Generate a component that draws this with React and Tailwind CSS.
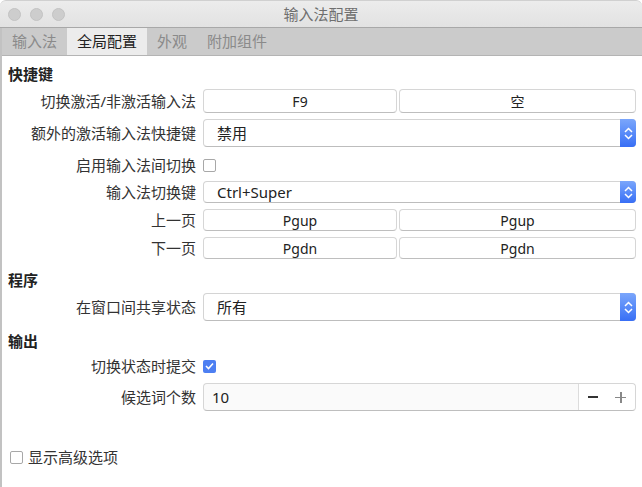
import React from 'react';

const font = { fontFamily: '"Noto Sans", "Noto Sans CJK SC", sans-serif' };

function Stepper() {
	return (
		<div className="w-[16px] self-stretch rounded-r-[4px] bg-gradient-to-b from-[#7ba6fb] to-[#386ef5] flex flex-col items-center justify-center gap-[1px] -my-px -mr-px">
			<svg width="9" height="6" viewBox="0 0 9 6">
				<path d="M1 5 L4.5 1.5 L8 5" stroke="white" strokeWidth="1.5" fill="none" />
			</svg>
			<svg width="9" height="6" viewBox="0 0 9 6">
				<path d="M1 1 L4.5 4.5 L8 1" stroke="white" strokeWidth="1.5" fill="none" />
			</svg>
		</div>
	);
}

function Select({ value }) {
	return (
		<div className="flex items-center h-full rounded-[4px] border border-[#d4d4d4] border-b-[#bdbdbd] bg-white">
			<span className="flex-1 pl-[13px] text-[15px] text-[#222]">{value}</span>
			<Stepper />
		</div>
	);
}

function KeyButton({ children, className = 'flex-1' }) {
	return (
		<div className={`h-full flex items-center justify-center rounded-[4px] border border-[#d6d6d6] border-b-[#bebebe] bg-white text-[14px] text-[#222] ${className}`}>
			{children}
		</div>
	);
}

function Checkbox({ checked }) {
	if (checked) {
		return (
			<div className="w-[13px] h-[13px] rounded-[2px] bg-[#4d7ff2] flex items-center justify-center">
				<svg width="9" height="8" viewBox="0 0 9 8">
					<path d="M1 4 L3.5 6.5 L8 1.5" stroke="white" strokeWidth="1.6" fill="none" />
				</svg>
			</div>
		);
	}
	return <div className="w-[13px] h-[13px] rounded-[2px] border border-[#a8a8a8] bg-white" />;
}

function Row({ label, className, children }) {
	return (
		<div className={`flex items-center pr-[6px] ${className}`}>
			<div className="w-[194px] shrink-0 text-right text-[15px] text-[#333] leading-none">{label}</div>
			<div className="ml-[7px] flex-1 h-full flex items-center">{children}</div>
		</div>
	);
}

function KeyPair({ a, b }) {
	return (
		<div className="flex-1 flex gap-[2px] h-full">
			<KeyButton className="w-[194px]">{a}</KeyButton>
			<KeyButton>{b}</KeyButton>
		</div>
	);
}

function Heading({ children, className }) {
	return <div className={`h-[24px] flex items-center pl-[6px] text-[15px] font-bold text-[#222] ${className}`}>{children}</div>;
}

export default function App() {
	const tabs = ['输入法', '全局配置', '外观', '附加组件'];

	return (
		<div className="w-[642px] h-[487px] bg-white overflow-hidden flex flex-col" style={font}>
			{/* Title bar */}
			<div className="h-[28px] relative flex items-center justify-center rounded-t-[6px] bg-gradient-to-b from-[#ececec] to-[#e2e2e2] border-t border-[#d0d0d0] border-b border-b-[#a8a8a8]">
				<div className="absolute left-[8px] top-[7px] flex gap-[9px]">
					<div className="w-[13px] h-[13px] rounded-full bg-[#cdcdcd] border border-[#c3c3c3]" />
					<div className="w-[13px] h-[13px] rounded-full bg-[#cdcdcd] border border-[#c3c3c3]" />
					<div className="w-[13px] h-[13px] rounded-full bg-[#cdcdcd] border border-[#c3c3c3]" />
				</div>
				<span className="text-[15px] text-[#6f6f6f]">输入法配置</span>
			</div>

			<div className="flex-1 flex flex-col border-l-2 border-[#c2c2c2]">
				{/* Tabs */}
				<div className="h-[28px] flex bg-[#cbcbcb] border-b border-[#b4b4b4]">
					{tabs.map((t, i) => (
						<div
							key={t}
							className={`flex items-center px-[10px] text-[15px] ${
								i === 1 ? 'bg-[#ececec] text-[#222]' : 'text-[#8a8a8a]'
							}`}
						>
							{t}
						</div>
					))}
				</div>

				{/* Content */}
				<div className="flex flex-col pt-[6px]">
					<Heading>快捷键</Heading>
					<Row label="切换激活/非激活输入法" className="mt-[3px] h-[24px]">
						<KeyPair a="F9" b="空" />
					</Row>
					<Row label="额外的激活输入法快捷键" className="mt-[6px] h-[28px]">
						<div className="flex-1 h-full">
							<Select value="禁用" />
						</div>
					</Row>
					<Row label="启用输入法间切换" className="mt-[6px] h-[24px]">
						<Checkbox />
					</Row>
					<Row label="输入法切换键" className="mt-[4px] h-[22px]">
						<div className="flex-1 h-full">
							<Select value="Ctrl+Super" />
						</div>
					</Row>
					<Row label="上一页" className="mt-[6px] h-[22px]">
						<KeyPair a="Pgup" b="Pgup" />
					</Row>
					<Row label="下一页" className="mt-[6px] h-[22px]">
						<KeyPair a="Pgdn" b="Pgdn" />
					</Row>

					<Heading className="mt-[9px]">程序</Heading>
					<Row label="在窗口间共享状态" className="mt-[1px] h-[28px]">
						<div className="flex-1 h-full">
							<Select value="所有" />
						</div>
					</Row>

					<Heading className="mt-[8px]">输出</Heading>
					<Row label="切换状态时提交" className="mt-[1px] h-[24px]">
						<Checkbox checked />
					</Row>
					<Row label="候选词个数" className="mt-[5px] h-[28px]">
						<div className="flex-1 h-full flex rounded-[4px] border border-[#d6d6d6] border-b-[#bebebe] bg-[#fafafa]">
							<div className="flex-1 flex items-center pl-[8px] text-[15px] text-[#222]">10</div>
							<div className="w-[57px] flex items-center justify-around border-l border-[#dcdcdc] bg-white rounded-r-[4px]">
								<span className="w-[10px] h-[2px] bg-[#333]" />
								<span className="relative w-[11px] h-[11px]">
									<span className="absolute left-0 top-[5px] w-[11px] h-[1.5px] bg-[#888]" />
									<span className="absolute top-0 left-[5px] h-[11px] w-[1.5px] bg-[#888]" />
								</span>
							</div>
						</div>
					</Row>

					<div className="mt-[34px] h-[24px] flex items-center pl-[8px] gap-[5px]">
						<Checkbox />
						<span className="text-[15px] text-[#333]">显示高级选项</span>
					</div>
				</div>
			</div>
		</div>
	);
}
